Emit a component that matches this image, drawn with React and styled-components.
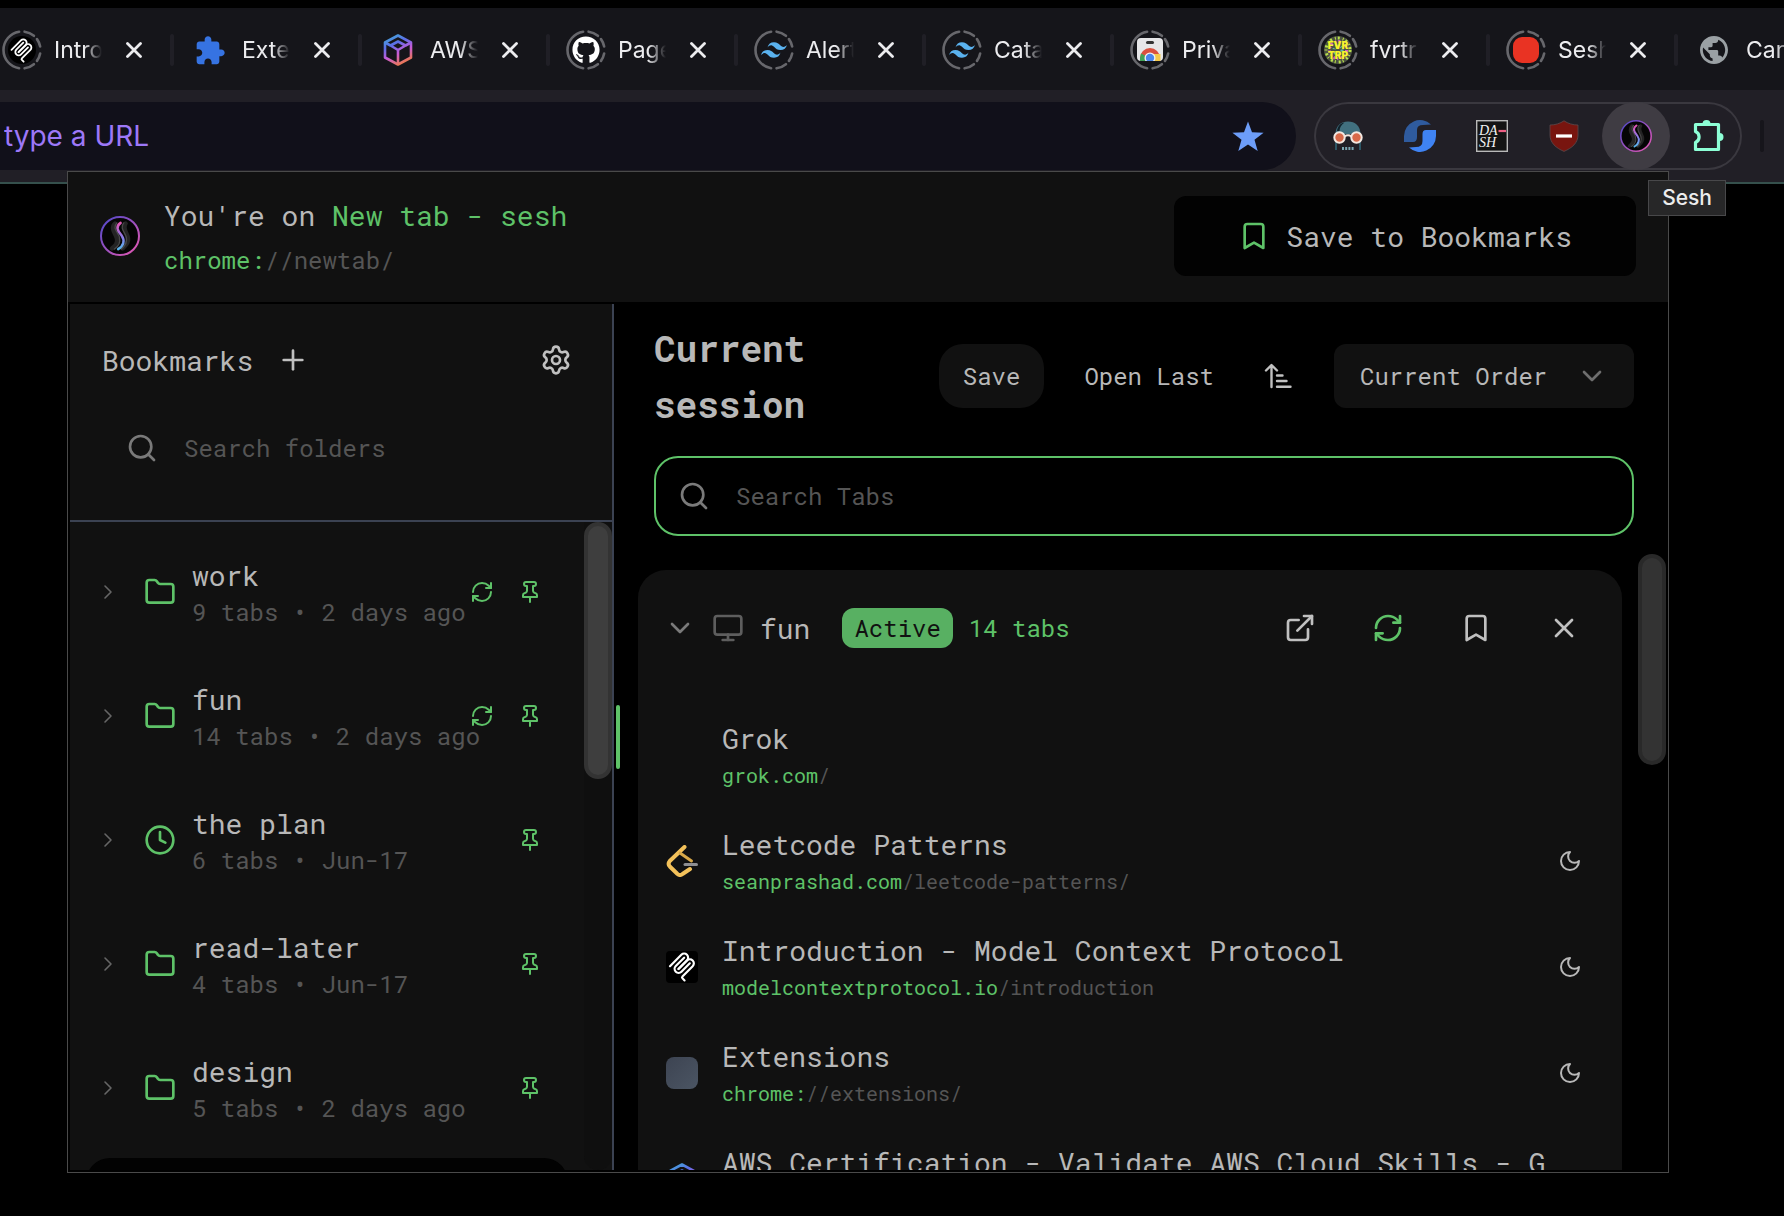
import React from "react";
import styled, { createGlobalStyle } from "styled-components";
import {
  Bookmark,
  ChevronDown,
  ChevronRight,
  Clock4,
  ExternalLink,
  Folder,
  Monitor,
  Plus,
  RefreshCw,
  Search,
  Settings,
  X,
} from "lucide-react";
import { FaGithub } from "react-icons/fa";

const color = {
  green: "#5ec268",
  badge: "#58b062",
  text: "#b8b8b8",
  icon: "#7a7a7a",
  muted: "#555555",
  dim: "#5e5e5e",
  panel: "#111111",
  divider: "#3b4252",
};

const mono = `"Roboto Mono", "Noto Sans Mono", "DejaVu Sans Mono", "Liberation Mono", monospace`;
const sans = `Inter, Roboto, "Liberation Sans", sans-serif`;

const GlobalStyle = createGlobalStyle`
  *, *::before, *::after { box-sizing: border-box; }
  body { margin: 0; background: #000; color: ${color.text}; }
  button, input, select { font: inherit; color: inherit; }
  svg { display: block; flex: none; }
`;

/* ---------- browser window ---------- */

const Page = styled.div`
  position: relative;
  display: flex;
  flex-direction: column;
  min-height: 100vh;
  padding-top: 8px;
  overflow: hidden;
  background: #000;
  font-family: ${sans};
`;

const TabStrip = styled.div`
  display: flex;
  align-items: center;
  height: 82px;
  padding-top: 2px;
  margin-left: -18px;
  background: #15151a;
`;

const BrowserTab = styled.div`
  display: flex;
  align-items: center;
  flex: 0 0 188px;
  &::before {
    content: "";
    width: 4px;
    height: 32px;
    margin-right: 16px;
    border-radius: 2px;
    background: #201f26;
  }
`;

const TabLabel = styled.span`
  width: 50px;
  margin: 0 22px 0 12px;
  overflow: hidden;
  white-space: nowrap;
  font-size: 23px;
  line-height: 32px;
  color: #ececef;
  mask-image: linear-gradient(90deg, #000 30px, transparent 48px);
`;

const PlainButton = styled.button`
  display: flex;
  align-items: center;
  justify-content: center;
  padding: 0;
  border: 0;
  background: none;
  cursor: pointer;
`;

const TabClose = styled(PlainButton)`
  width: 16px;
  height: 32px;
  color: #ececef;
`;

const Toolbar = styled.div`
  display: flex;
  align-items: center;
  gap: 18px;
  height: 94px;
  padding: 12px 20px 12px 0;
  border-bottom: 2px solid #35504c;
  background: #211f26;
`;

const AddressBar = styled.label`
  display: flex;
  align-items: center;
  flex: 1;
  height: 68px;
  padding: 0 32px 0 4px;
  border-radius: 0 34px 34px 0;
  background: #11101a;
`;

const AddressInput = styled.input`
  flex: 1;
  min-width: 0;
  padding: 0;
  border: 0;
  outline: 0;
  background: none;
  font-size: 28px;
  color: #9d78f8;
  &::placeholder { color: #9d78f8; opacity: 1; }
`;

const ExtensionPill = styled.div`
  display: flex;
  gap: 4px;
  height: 68px;
  border-radius: 34px;
  box-shadow: inset 0 0 0 2px #3a383f;
`;

const ExtensionButton = styled(PlainButton)`
  width: 68px;
  height: 68px;
  border-radius: 50%;
  background: ${(p) => (p.$active ? "#3f3c43" : "transparent")};
`;

const ToolbarDivider = styled.span`
  width: 4px;
  height: 32px;
  border-radius: 2px;
  background: #16151b;
`;

const Tooltip = styled.div`
  position: absolute;
  top: 180px;
  right: 58px;
  padding: 0 13px;
  border: 1px solid #48484a;
  background: #272728;
  font-size: 21px;
  font-weight: 500;
  line-height: 34px;
  color: #ececec;
`;

/* ---------- extension popup ---------- */

const Popup = styled.div`
  position: absolute;
  top: 171px;
  right: 115px;
  bottom: 43px;
  left: 67px;
  display: flex;
  flex-direction: column;
  border: 1px solid #4a4a4a;
  background: #000;
  font-family: ${mono};
  font-size: 24px;
`;

const PopupHeader = styled.header`
  display: flex;
  align-items: center;
  gap: 24px;
  padding: 24px 32px 26px;
  background: ${color.panel};
`;

const HeaderText = styled.div`
  display: flex;
  flex: 1;
  flex-direction: column;
  gap: 4px;
  height: 80px;
`;

const HeaderTitle = styled.div`
  font-size: 28px;
  line-height: 40px;
`;

const Accent = styled.span`
  color: ${color.green};
`;

const Url = styled.div`
  font-size: ${(p) => (p.$small ? "20px" : "24px")};
  line-height: ${(p) => (p.$small ? "32px" : "40px")};
  color: ${color.muted};
`;

const SaveToBookmarks = styled(PlainButton)`
  gap: 16px;
  height: 80px;
  padding: 0 64px;
  border-radius: 12px;
  background: #020202;
  font-size: 28px;
  svg { color: ${color.green}; }
`;

const PopupBody = styled.div`
  display: flex;
  flex: 1;
  min-height: 0;
  padding: 2px;
`;

const Sidebar = styled.aside`
  display: flex;
  flex: none;
  flex-direction: column;
  width: 544px;
  border-right: 2px solid ${color.divider};
  background: ${color.panel};
`;

const SidebarHeader = styled.div`
  display: flex;
  flex: none;
  flex-direction: column;
  gap: 40px;
  height: 218px;
  padding: 32px 40px 32px 32px;
  border-bottom: 2px solid ${color.divider};
`;

const SidebarTitleRow = styled.div`
  display: flex;
  align-items: center;
  gap: 24px;
  height: 48px;
`;

const SidebarTitle = styled.h2`
  margin: 0;
  font-size: 28px;
  font-weight: 400;
`;

const IconButton = styled(PlainButton)`
  width: 32px;
  height: 32px;
  color: ${(p) => (p.$green ? color.green : "#c0c0c0")};
`;

const SettingsButton = styled(IconButton)`
  margin-left: auto;
`;

const SearchField = styled.label`
  display: flex;
  align-items: center;
  gap: 26px;
  height: ${(p) => (p.$framed ? "80px" : "48px")};
  padding: 0 22px;
  border: 2px solid ${(p) => (p.$framed ? color.green : "transparent")};
  border-radius: 24px;
  color: ${color.icon};
`;

const SearchInput = styled.input`
  flex: 1;
  min-width: 0;
  padding: 0;
  border: 0;
  outline: 0;
  background: none;
  color: ${color.text};
  &::placeholder { color: ${color.muted}; opacity: 1; }
`;

const ScrollArea = styled.div`
  display: flex;
  flex: 1;
  min-height: 0;
  overflow: hidden;
`;

const ScrollContent = styled.div`
  flex: 1;
  min-width: 0;
  padding: 16px;
`;

const ScrollTrack = styled.div`
  width: 28px;
  border-radius: 0 0 14px 14px;
  background: ${(p) => (p.$tinted ? "#0f0f0f" : "transparent")};
`;

const ScrollThumb = styled.div`
  height: ${(p) => p.$size};
  border: 4px solid ${(p) => (p.$light ? "#333333" : "#292929")};
  border-radius: 14px;
  background: ${(p) => (p.$light ? "#3e3e3e" : "#333333")};
`;

const FolderList = styled.ul`
  display: flex;
  flex-direction: column;
  gap: 16px;
  margin: 0;
  padding: 0;
  list-style: none;
`;

const FolderRow = styled.li`
  display: flex;
  align-items: center;
  height: 108px;
  padding: 0 26px 0 10px;
  border-radius: 24px;
  color: ${color.green};
  background: ${(p) => (p.$dark ? "#020202" : "transparent")};
`;

const ExpandButton = styled(PlainButton)`
  width: 24px;
  height: 24px;
  margin-right: 24px;
  color: #666666;
`;

const FolderText = styled.div`
  flex: 1;
  min-width: 0;
  margin-left: 16px;
  padding-top: 4px;
  white-space: nowrap;
  line-height: 36px;
  color: ${color.muted};
`;

const FolderName = styled.div`
  font-size: 28px;
  color: ${color.text};
`;

const FolderActions = styled.div`
  display: flex;
  gap: 24px;
`;

const FolderAction = styled(PlainButton)`
  width: 24px;
  height: 24px;
  color: ${color.green};
`;

const SleepButton = styled(FolderAction)`
  color: ${color.text};
`;

const ResizeHandle = styled.div`
  align-self: center;
  width: 4px;
  height: 64px;
  margin: 0 2px;
  border-radius: 2px;
  background: ${color.green};
`;

const Main = styled.main`
  display: flex;
  flex: 1;
  flex-direction: column;
  min-width: 0;
`;

const MainTop = styled.div`
  display: flex;
  flex-direction: column;
  gap: 24px;
  padding: 16px 32px 18px;
`;

const SessionBar = styled.div`
  display: flex;
  align-items: center;
  gap: 16px;
`;

const SessionTitle = styled.h1`
  flex: 1;
  min-width: 0;
  margin: 0;
  font-size: 36px;
  font-weight: 700;
  line-height: 56px;
`;

const PillButton = styled(PlainButton)`
  height: 64px;
  padding: 0 24px;
  border-radius: 24px;
  white-space: nowrap;
  background: ${(p) => (p.$filled ? color.panel : "transparent")};
`;

const SortButton = styled(PlainButton)`
  width: 48px;
  height: 64px;
  margin-right: 16px;
  color: #c0c0c0;
`;

const SelectBox = styled.label`
  display: grid;
  align-items: center;
  width: 300px;
  height: 64px;
  border-radius: 12px;
  background: ${color.panel};
  color: #6e6e6e;
  & > * { grid-area: 1 / 1; }
  svg { justify-self: end; margin-right: 26px; pointer-events: none; }
`;

const Select = styled.select`
  width: 100%;
  height: 100%;
  padding: 0 64px 0 26px;
  border: 0;
  outline: 0;
  appearance: none;
  background: none;
  color: ${color.text};
`;

const SessionCard = styled.section`
  border-radius: 28px;
  background: ${color.panel};
`;

const CardHeader = styled.div`
  display: flex;
  align-items: center;
  gap: 16px;
  height: 116px;
  padding: 0 26px;
  color: ${color.dim};
`;

const CardTitle = styled.h3`
  margin: 0 16px 0 0;
  font-size: 28px;
  font-weight: 400;
  color: ${color.text};
`;

const Badge = styled.span`
  padding: 0 12px;
  border-radius: 12px;
  background: ${color.badge};
  line-height: 40px;
  color: #111;
`;

const CardActions = styled.div`
  display: flex;
  gap: 24px;
  margin-left: auto;
`;

const CardAction = styled(IconButton)`
  width: 64px;
  height: 64px;
  border-radius: 50%;
`;

const TabList = styled.ul`
  margin: 0;
  padding: 16px 0 0;
  list-style: none;
`;

const TabRow = styled.li`
  display: flex;
  align-items: center;
  height: 106px;
  padding: 0 40px 0 28px;
`;

const TabLink = styled.a`
  display: flex;
  align-items: center;
  flex: 1;
  gap: 24px;
  min-width: 0;
  white-space: nowrap;
  color: inherit;
  text-decoration: none;
`;

const Favicon = styled.span`
  flex: none;
  width: 32px;
  height: 32px;
  border-radius: 8px;
  background: ${(p) => (p.$blank ? "linear-gradient(135deg, #3d4452, #4b5563)" : "none")};
`;

const TabTitle = styled.div`
  font-size: 28px;
  line-height: 40px;
`;

/* ---------- drawings ---------- */

const Ring = ({ children }) => {
  const pt = (deg) => {
    const a = (deg * Math.PI) / 180;
    return `${20 + 18.5 * Math.cos(a)} ${20 - 18.5 * Math.sin(a)}`;
  };
  const arc = (from, to) =>
    `M${pt(from)}A18.5 18.5 0 ${to - from > 180 ? 1 : 0} 0 ${pt(to)}`;
  const d = [[99, 261], [50, 82], [11, 36], [-36, -11], [-82, -50]]
    .map(([a, b]) => arc(a, b))
    .join("");
  return (
    <svg width="40" height="40" viewBox="0 0 40 40">
      <path d={d} fill="none" stroke="#67676c" strokeWidth="2.6" strokeLinecap="round" />
      {children}
    </svg>
  );
};

const McpMark = () => (
  <g fill="none" stroke="#fff" strokeWidth="13" strokeLinecap="round">
    <path d="M18 84.853 85.882 16.97c9.373-9.372 24.569-9.372 33.941 0 9.373 9.373 9.373 24.57 0 33.942L68.558 102.177" />
    <path d="M69.265 101.47l50.558-50.558c9.373-9.373 24.569-9.373 33.942 0l.353.353c9.373 9.373 9.373 24.569 0 33.941L92.725 146.6c-3.124 3.124-3.124 8.189 0 11.313l12.606 12.607" />
    <path d="M102.853 33.941 52.648 84.146c-9.372 9.372-9.372 24.568 0 33.941 9.373 9.372 24.569 9.372 33.941 0l50.205-50.205" />
  </g>
);

const McpTabIcon = () => (
  <Ring>
    <circle cx="20" cy="20" r="14" fill="#000" />
    <svg x="7" y="8" width="25" height="25" viewBox="0 0 180 180"><McpMark /></svg>
  </Ring>
);

const McpFavicon = () => (
  <svg width="32" height="32" viewBox="0 0 32 32">
    <rect width="32" height="32" rx="4" fill="#000" />
    <svg x="1" y="1" width="30" height="30" viewBox="0 0 180 180"><McpMark /></svg>
  </svg>
);

const PuzzleIcon = () => (
  <svg width="40" height="40" viewBox="-3 -3.6 30 30">
    <path
      fill="#3673e2"
      d="M20.5 11H19V7c0-1.1-.9-2-2-2h-4V3.5C13 2.12 11.88 1 10.5 1S8 2.12 8 3.5V5H4c-1.1 0-1.99.9-1.99 2v3.8H3.5c1.49 0 2.7 1.21 2.7 2.7s-1.21 2.7-2.7 2.7H2V20c0 1.1.9 2 2 2h3.8v-1.5c0-1.49 1.21-2.7 2.7-2.7s2.7 1.21 2.7 2.7V22H17c1.1 0 2-.9 2-2v-4h1.5c1.38 0 2.5-1.12 2.5-2.5S21.88 11 20.5 11z"
    />
  </svg>
);

const CubeDrawing = ({ id }) => (
  <>
    <defs>
      <linearGradient id={id} gradientUnits="userSpaceOnUse" x1="8" y1="1" x2="22" y2="31">
        <stop offset="0" stopColor="#43a6d8" />
        <stop offset="0.3" stopColor="#5b6fe8" />
        <stop offset="0.6" stopColor="#c65bd8" />
        <stop offset="1" stopColor="#f07c3c" />
      </linearGradient>
    </defs>
    <g fill="none" stroke={`url(#${id})`} strokeWidth="2.6" strokeLinejoin="round">
      <path d="M16 1.5 29 8.500V23.500L16 30.500 3 23.500V8.500Z" />
      <path d="M16 7.500 23.500 11.500 16 16 8.500 11.500ZM16 16V30M3 8.500 8.500 11.500M29 8.500 23.500 11.500" />
    </g>
  </>
);

const AwsTabIcon = () => (
  <svg width="40" height="40" viewBox="0 0 40 40">
    <svg x="4" y="4" width="32" height="32" viewBox="0 0 32 32"><CubeDrawing id="cube-tab" /></svg>
  </svg>
);

const AwsFavicon = () => (
  <svg width="32" height="32" viewBox="0 0 32 32"><CubeDrawing id="cube-row" /></svg>
);

const GithubTabIcon = () => (
  <Ring>
    <FaGithub x="6" y="6" width="28" height="28" size={28} color="#fff" />
  </Ring>
);

const TailwindTabIcon = () => (
  <Ring>
    <svg x="7" y="7" width="26" height="26" viewBox="0 0 24 24">
      <path
        fill="#5ab2ef"
        d="M12 4.800c-3.200 0-5.200 1.600-6 4.800 1.200-1.600 2.600-2.200 4.200-1.800.913.228 1.565.89 2.288 1.624C13.666 10.618 15.027 12 18 12c3.200 0 5.200-1.600 6-4.800-1.200 1.600-2.600 2.200-4.200 1.800-.913-.228-1.565-.89-2.288-1.624C16.337 6.182 14.976 4.800 12 4.800zM6 12c-3.200 0-5.200 1.600-6 4.800 1.200-1.600 2.600-2.200 4.200-1.800.913.228 1.565.89 2.288 1.624C7.666 17.818 9.027 19.200 12 19.200c3.200 0 5.200-1.600 6-4.800-1.200 1.600-2.600 2.200-4.200 1.800-.913-.228-1.565-.89-2.288-1.624C10.337 13.382 8.976 12 6 12z"
      />
    </svg>
  </Ring>
);

const StoreTabIcon = () => (
  <Ring>
    <clipPath id="store-clip"><rect x="7" y="8" width="26" height="23" rx="4" /></clipPath>
    <g clipPath="url(#store-clip)">
      <rect x="7" y="8" width="26" height="23" fill="#e6e6e8" />
      <rect x="16" y="11" width="8" height="3" rx="1.500" fill="#333" />
      <circle cx="20" cy="28" r="10" fill="#d9503f" />
      <path d="M11 23.500 20 28 18 38H10V28Z" fill="#3fa257" />
      <path d="M20 24H30.500V38H18Z" fill="#f3c94b" />
      <circle cx="20" cy="28" r="5.500" fill="#f1f1f1" />
      <circle cx="20" cy="28" r="4.200" fill="#4a86ee" />
    </g>
  </Ring>
);

const FvrTabIcon = () => (
  <Ring>
    <circle cx="20" cy="20" r="14" fill="#4c5142" />
    <g fill="none" strokeWidth="3" strokeDasharray="2 3 1 2">
      <circle cx="20" cy="20" r="12" stroke="#b7e04a" />
      <circle cx="20" cy="20" r="8.500" stroke="#d35cc0" />
      <circle cx="20" cy="20" r="4" stroke="#62b4a8" />
    </g>
    <g textAnchor="middle" fontSize="10" fontWeight="900" fontFamily="Inter, sans-serif" fill="#f7f32a">
      <text x="20" y="19">FVR</text>
      <text x="20" y="29">TRP</text>
    </g>
  </Ring>
);

const RedTabIcon = () => (
  <Ring>
    <rect x="7" y="7" width="26" height="26" rx="9" fill="#e93323" />
  </Ring>
);

const GlobeTabIcon = () => (
  <svg width="40" height="40" viewBox="-2.300 -2.300 28.600 28.600">
    <path
      fill="#9aa0a4"
      d="M12 2C6.480 2 2 6.480 2 12s4.480 10 10 10 10-4.480 10-10S17.520 2 12 2zm-1 17.930c-3.950-.490-7-3.850-7-7.930 0-.620.080-1.210.210-1.790L9 15v1c0 1.100.900 2 2 2v1.930zm6.900-2.540c-.260-.810-1-1.390-1.900-1.390h-1v-3c0-.550-.450-1-1-1H8v-2h2c.550 0 1-.450 1-1V7h2c1.100 0 2-.900 2-2v-.410c2.930 1.190 5 4.060 5 7.410 0 2.080-.800 3.970-2.100 5.390z"
    />
  </svg>
);

const CloseGlyph = () => (
  <svg width="16" height="16" viewBox="0 0 16 16" stroke="currentColor" strokeWidth="2.800" strokeLinecap="round">
    <path d="M1.500 1.500 14.500 14.500M14.500 1.500 1.500 14.500" />
  </svg>
);

const StarIcon = () => (
  <svg width="32" height="32" viewBox="0 0 32 32">
    <path fill="#6d9df8" d="M16 1.500 20 12.300 31.600 12.700 22.500 19.700 25.700 31 16 24.500 6.300 31 9.500 19.700.400 12.700 12 12.300Z" />
  </svg>
);

const BaldManIcon = () => (
  <svg width="32" height="32" viewBox="0 0 32 32">
    <path d="M3.500 14C3.500 6 9 1.500 16 1.500S28.500 6 28.500 14Z" fill="#41707f" />
    <path d="M5 11C5.500 6 9 3 12.500 2.500 9.500 4.500 7.500 7.500 7.500 11Z" fill="#11222a" />
    <path d="M4 22V30M28 22V30" stroke="#2d5665" strokeWidth="2" />
    <path d="M10 28.500H22" stroke="#7ba6b2" strokeWidth="3" strokeDasharray="2 1.200" />
    <circle cx="7.500" cy="17.500" r="5.200" fill="#d8694a" stroke="#f3e7e0" strokeWidth="2" />
    <circle cx="24.500" cy="17.500" r="5.200" fill="#d8694a" stroke="#f3e7e0" strokeWidth="2" />
    <path d="M12.500 16.500Q16 14 19.500 16.500" fill="none" stroke="#f3e7e0" strokeWidth="2" />
  </svg>
);

const SwirlIcon = () => (
  <svg width="32" height="32" viewBox="0 0 32 32">
    <path d="M27 4.500A16 16 0 0 0 0 16V22H9Q13 22 13 17V10Q13 5 19 5Z" fill="#2f5b9e" />
    <path d="M5 27.500A16 16 0 0 0 32 16V10H22Q18.500 10 18.500 14V21Q18.500 27 12 27Z" fill="#3f83f3" />
  </svg>
);

const DashIcon = () => (
  <svg width="32" height="32" viewBox="0 0 32 32">
    <rect x="0.700" y="0.700" width="30.600" height="30.600" fill="#141414" stroke="#b9b9b9" strokeWidth="1.400" />
    <g fill="#f2f2f2" fontFamily="'Liberation Serif', serif" fontStyle="italic" fontSize="14">
      <text x="3" y="15">DA</text>
      <text x="3" y="27">SH</text>
    </g>
    <path d="M22.500 11H30" stroke="#ec5f83" strokeWidth="2.200" />
  </svg>
);

const ShieldIcon = () => (
  <svg width="32" height="32" viewBox="0 0 32 32">
    <path d="M16 .800C12 3.600 7 5 2 5V15C2 23 8 28 16 31.400 24 28 30 23 30 15V5C25 5 20 3.600 16 .800Z" fill="#78150f" stroke="#5a4a4c" strokeWidth="0.800" />
    <path d="M8 16H24" stroke="#fff" strokeWidth="3.200" />
  </svg>
);

const SeshLogo = ({ size, id }) => (
  <svg width={size} height={size} viewBox="0 0 32 32">
    <defs>
      <linearGradient id={`${id}-ring`} x1="0.100" y1="0.100" x2="0.900" y2="0.900">
        <stop offset="0" stopColor="#5b49c8" />
        <stop offset="1" stopColor="#d957b4" />
      </linearGradient>
      <linearGradient id={`${id}-s`} x1="0" y1="0" x2="0" y2="1">
        <stop offset="0" stopColor="#e256b4" />
        <stop offset="0.550" stopColor="#8a7be6" />
        <stop offset="1" stopColor="#58b7ec" />
      </linearGradient>
    </defs>
    <circle cx="16" cy="16" r="15.200" fill="#050505" stroke={`url(#${id}-ring)`} strokeWidth="1.600" />
    <g fill="none" strokeLinecap="round">
      <path d="M12 6C8 10 12.500 14 13.500 18S12 24 9.500 26M20.500 6C17.500 10 22 14 22.500 18S20 24 18 26" stroke="#242424" strokeWidth="3.500" />
      <path d="M13.500 5.500C9.500 9.500 14.500 13 15.500 17S14.500 24.500 11.500 26.500M19 5.500C15.500 9.500 20 13 21 17S19.500 24.500 17 26.500" stroke="#484848" strokeWidth="1.100" />
      <path d="M16.500 5.500C11.500 9 15 12.500 17.500 16S19 24 14.500 26.500" stroke={`url(#${id}-s)`} strokeWidth="2" />
    </g>
  </svg>
);

const ExtensionsMenuIcon = () => (
  <svg width="34" height="34" viewBox="0 0 34 34">
    <path
      d="M4.500 5.500H27.500V30.500H4.500V23.500A6 6 0 0 0 4.500 12.500Z"
      fill="none" stroke="#8dffd6" strokeWidth="3.200" strokeLinejoin="round"
    />
    <path d="M11.500 5a4 4 0 0 1 8 0ZM28.500 14a4 4 0 0 1 0 8Z" fill="#8dffd6" />
  </svg>
);

const SortIcon = () => (
  <svg width="32" height="32" viewBox="0 0 32 32" fill="none" stroke="currentColor" strokeWidth="2.400" strokeLinecap="round" strokeLinejoin="round">
    <path d="M9.500 27V5.200M4 10.500 9.500 5 15 10.500M15 15.500H20.500M15 21H24.500M15 26.800H28.500" />
  </svg>
);

const PinIcon = () => (
  <svg width="24" height="24" viewBox="0 0 24 24" fill="none" stroke="currentColor" strokeWidth="2" strokeLinecap="round" strokeLinejoin="round">
    <path d="M12 17v5M5 17h14v-1.760a2 2 0 0 0-1.110-1.790l-1.780-.900A2 2 0 0 1 15 10.760V6h1a2 2 0 0 0 0-4H8a2 2 0 0 0 0 4h1v4.760a2 2 0 0 1-1.110 1.790l-1.780.900A2 2 0 0 0 5 15.240Z" />
  </svg>
);

const MoonIcon = () => (
  <svg width="24" height="24" viewBox="0 0 24 24" fill="none" stroke="currentColor" strokeWidth="2" strokeLinecap="round" strokeLinejoin="round">
    <path d="M12 3a6 6 0 0 0 9 9 9 9 0 1 1-9-9Z" />
  </svg>
);

const LeetcodeFavicon = () => (
  <svg width="32" height="32" viewBox="0 0 32 32" fill="none" strokeLinecap="round" strokeLinejoin="round">
    <path d="M18.500 2 3.800 16Q1.500 19 3.800 21.500L11.500 29Q14 31 16.500 29L24 24" stroke="#f3c15a" strokeWidth="4" />
    <path d="M14 8 25.500 16" stroke="#d9a949" strokeWidth="3" />
    <path d="M19 19.500H30.500" stroke="#8e8e92" strokeWidth="3" />
  </svg>
);

/* ---------- data ---------- */

const browserTabs = [
  { label: "Intro", icon: McpTabIcon },
  { label: "Exte", icon: PuzzleIcon },
  { label: "AWS", icon: AwsTabIcon },
  { label: "Page", icon: GithubTabIcon },
  { label: "Alert", icon: TailwindTabIcon },
  { label: "Cata", icon: TailwindTabIcon },
  { label: "Priva", icon: StoreTabIcon },
  { label: "fvrtr", icon: FvrTabIcon },
  { label: "Sesh", icon: RedTabIcon },
  { label: "Can", icon: GlobeTabIcon },
];

const extensions = [
  { name: "Glasses", icon: <BaldManIcon /> },
  { name: "Swirl", icon: <SwirlIcon /> },
  { name: "Dash", icon: <DashIcon /> },
  { name: "Blocker", icon: <ShieldIcon /> },
  { name: "Sesh", icon: <SeshLogo size={32} id="sesh-bar" />, active: true },
  { name: "Extensions", icon: <ExtensionsMenuIcon /> },
];

const folders = [
  { name: "work", tabs: 9, when: "2 days ago", synced: true },
  { name: "fun", tabs: 14, when: "2 days ago", synced: true },
  { name: "the plan", tabs: 6, when: "Jun-17", icon: Clock4 },
  { name: "read-later", tabs: 4, when: "Jun-17" },
  { name: "design", tabs: 5, when: "2 days ago" },
];

const sessionTabs = [
  { title: "Grok", host: "grok.com", path: "/", icon: <Favicon /> },
  { title: "Leetcode Patterns", host: "seanprashad.com", path: "/leetcode-patterns/", icon: <LeetcodeFavicon />, sleep: true },
  { title: "Introduction - Model Context Protocol", host: "modelcontextprotocol.io", path: "/introduction", icon: <McpFavicon />, sleep: true },
  { title: "Extensions", host: "chrome:", path: "//extensions/", icon: <Favicon $blank />, sleep: true },
  { title: "AWS Certification - Validate AWS Cloud Skills - G", host: "aws.amazon.com", path: "/certification/", icon: <AwsFavicon /> },
];

/* ---------- app ---------- */

function BrowserChrome() {
  return (
    <>
      <TabStrip>
        {browserTabs.map(({ label, icon: Icon }) => (
          <BrowserTab key={label}>
            <Icon />
            <TabLabel>{label}</TabLabel>
            <TabClose aria-label={`Close ${label}`}><CloseGlyph /></TabClose>
          </BrowserTab>
        ))}
      </TabStrip>
      <Toolbar>
        <AddressBar>
          <AddressInput aria-label="Address" placeholder="type a URL" />
          <StarIcon />
        </AddressBar>
        <ExtensionPill>
          {extensions.map((e) => (
            <ExtensionButton key={e.name} aria-label={e.name} $active={e.active}>
              {e.icon}
            </ExtensionButton>
          ))}
        </ExtensionPill>
        <ToolbarDivider />
      </Toolbar>
    </>
  );
}

function FolderItem({ name, tabs, when, synced, icon: Icon = Folder }) {
  return (
    <FolderRow>
      <ExpandButton aria-label={`Expand ${name}`}>
        <ChevronRight size={24} strokeWidth={1.6} />
      </ExpandButton>
      <Icon size={32} strokeWidth={2} />
      <FolderText>
        <FolderName>{name}</FolderName>
        {tabs} tabs • {when}
      </FolderText>
      <FolderActions>
        {synced && (
          <FolderAction aria-label={`Sync ${name}`}><RefreshCw size={24} /></FolderAction>
        )}
        <FolderAction aria-label={`Pin ${name}`}><PinIcon /></FolderAction>
      </FolderActions>
    </FolderRow>
  );
}

function BookmarksPanel() {
  return (
    <Sidebar>
      <SidebarHeader>
        <SidebarTitleRow>
          <SidebarTitle>Bookmarks</SidebarTitle>
          <IconButton aria-label="Add folder"><Plus size={32} /></IconButton>
          <SettingsButton aria-label="Settings"><Settings size={32} /></SettingsButton>
        </SidebarTitleRow>
        <SearchField>
          <Search size={32} />
          <SearchInput aria-label="Search folders" placeholder="Search folders" />
        </SearchField>
      </SidebarHeader>
      <ScrollArea>
        <ScrollContent>
          <FolderList>
            {folders.map((f) => <FolderItem key={f.name} {...f} />)}
            <FolderRow $dark />
          </FolderList>
        </ScrollContent>
        <ScrollTrack $tinted><ScrollThumb $light $size="257px" /></ScrollTrack>
      </ScrollArea>
    </Sidebar>
  );
}

function SessionPanel() {
  return (
    <Main>
      <MainTop>
        <SessionBar>
          <SessionTitle>Current session</SessionTitle>
          <PillButton $filled>Save</PillButton>
          <PillButton>Open Last</PillButton>
          <SortButton aria-label="Sort direction"><SortIcon /></SortButton>
          <SelectBox>
            <Select aria-label="Order" defaultValue="current">
              <option value="current">Current Order</option>
            </Select>
            <ChevronDown size={32} />
          </SelectBox>
        </SessionBar>
        <SearchField $framed>
          <Search size={32} />
          <SearchInput aria-label="Search Tabs" placeholder="Search Tabs" />
        </SearchField>
      </MainTop>
      <ScrollArea>
        <ScrollContent>
          <SessionCard>
            <CardHeader>
              <ChevronDown size={32} color={color.icon} />
              <Monitor size={32} />
              <CardTitle>fun</CardTitle>
              <Badge>Active</Badge>
              <Accent>14 tabs</Accent>
              <CardActions>
                <CardAction aria-label="Open in window"><ExternalLink size={32} /></CardAction>
                <CardAction aria-label="Sync" $green><RefreshCw size={32} /></CardAction>
                <CardAction aria-label="Bookmark"><Bookmark size={32} /></CardAction>
                <CardAction aria-label="Close"><X size={32} /></CardAction>
              </CardActions>
            </CardHeader>
            <TabList>
              {sessionTabs.map((t) => (
                <TabRow key={t.title}>
                  <TabLink href="#">
                    {t.icon}
                    <div>
                      <TabTitle>{t.title}</TabTitle>
                      <Url $small><Accent>{t.host}</Accent>{t.path}</Url>
                    </div>
                  </TabLink>
                  {t.sleep && (
                    <SleepButton aria-label={`Sleep ${t.title}`}><MoonIcon /></SleepButton>
                  )}
                </TabRow>
              ))}
            </TabList>
          </SessionCard>
        </ScrollContent>
        <ScrollTrack><ScrollThumb $size="211px" /></ScrollTrack>
      </ScrollArea>
    </Main>
  );
}

export default function App() {
  return (
    <Page>
      <GlobalStyle />
      <BrowserChrome />
      <Popup>
        <PopupHeader>
          <SeshLogo size={40} id="sesh-header" />
          <HeaderText>
            <HeaderTitle>You're on <Accent>New tab - sesh</Accent></HeaderTitle>
            <Url><Accent>chrome:</Accent>//newtab/</Url>
          </HeaderText>
          <SaveToBookmarks><Bookmark size={32} />Save to Bookmarks</SaveToBookmarks>
        </PopupHeader>
        <PopupBody>
          <BookmarksPanel />
          <ResizeHandle />
          <SessionPanel />
        </PopupBody>
      </Popup>
      <Tooltip role="tooltip">Sesh</Tooltip>
    </Page>
  );
}
